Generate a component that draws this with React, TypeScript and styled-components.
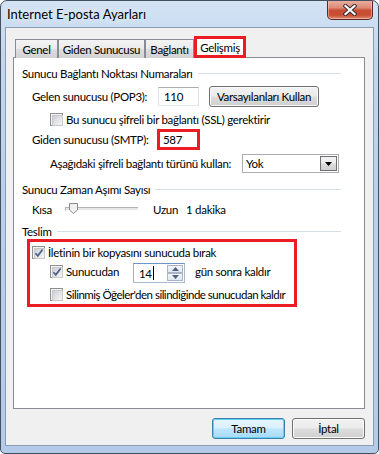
import React from "react";
import styled, { createGlobalStyle, css } from "styled-components";

const GlobalStyle = createGlobalStyle`
  html, body { margin: 0; padding: 0; background: #ffffff; }
  body { font-family: "Lato", "Liberation Sans", sans-serif; font-size: 11.5px; letter-spacing: -0.3px; color: #000; }
  * { box-sizing: border-box; }
`;

const RED = "#ec1c24";

const Window = styled.div`
  width: 379px;
  height: 454px;
  border: 1px solid #43505f;
  border-radius: 7px 7px 5px 5px;
  background: linear-gradient(180deg, #d3e3f4 0%, #c2d7ee 12%, #b9d1ec 40%, #b3cbe8 100%);
  display: flex;
  flex-direction: column;
  padding: 0 4px 7px 4px;
  overflow: hidden;
`;

const TitleBar = styled.div`
  height: 26px;
  display: flex;
  align-items: flex-start;
`;

const Title = styled.div`
  align-self: center;
  padding-left: 2px;
  line-height: 16px;
  font-size: 13px;
  letter-spacing: 0;
  color: #000;
  text-shadow: 0 0 6px rgba(255, 255, 255, 0.9);
`;

const CloseButton = styled.div`
  margin-left: auto;
  margin-top: -1px;
  margin-right: 1px;
  width: 46px;
  height: 20px;
  border: 1px solid #5a2a22;
  border-top: none;
  border-radius: 0 0 5px 5px;
  background: linear-gradient(180deg, #eab3a6 0%, #dd8c77 40%, #c74d33 55%, #c94f33 80%, #e09075 100%);
  box-shadow: inset 0 0 0 1px rgba(255, 220, 210, 0.45);
  display: flex;
  align-items: center;
  justify-content: center;
`;

const Client = styled.div`
  flex: 1;
  border: 1px solid #8a9cb2;
  background: #f0f0f0;
  padding: 8px 8px 0 7px;
  display: flex;
  flex-direction: column;
`;

const TabRow = styled.div`
  height: 22px;
  margin-bottom: -1px;
  padding-left: 2px;
  display: flex;
  align-items: flex-end;
  position: relative;
  z-index: 1;
`;

const Tab = styled.div<{ $selected?: boolean; $w: number }>`
  width: ${(p) => p.$w}px;
  height: 19px;
  border: 1px solid #898c95;
  border-bottom: none;
  background: linear-gradient(180deg, #f3f3f3 0%, #ebebeb 50%, #dedede 50%, #d2d2d2 100%);
  display: flex;
  align-items: center;
  justify-content: center;
  line-height: 15px;
  white-space: nowrap;
  ${(p) =>
    p.$selected &&
    css`
      height: 22px;
      background: #ffffff;
      border: 3px solid ${RED};
      align-items: flex-start;
      padding-top: 1px;
    `}
`;

const Panel = styled.div`
  flex: 1;
  background: #ffffff;
  border: 1px solid #898c95;
  padding: 8px 23px 0 8px;
  display: flex;
  flex-direction: column;
`;

const SectionHeading = styled.div<{ $gap?: number }>`
  display: flex;
  align-items: center;
  height: 15px;
  line-height: 15px;
  margin-top: ${(p) => p.$gap ?? 0}px;
  white-space: nowrap;
  &::after {
    content: "";
    flex: 1;
    height: 1px;
    margin-left: 5px;
    background: #d5dfe5;
  }
`;

const Row = styled.div<{ $gap: number; $indent: number; $h: number }>`
  display: flex;
  align-items: center;
  margin-top: ${(p) => p.$gap}px;
  padding-left: ${(p) => p.$indent}px;
  height: ${(p) => p.$h}px;
  white-space: nowrap;
`;

const Label = styled.span<{ $w?: number; $ml?: number; $tight?: boolean }>`
  line-height: 15px;
  ${(p) => p.$w !== undefined && css`width: ${p.$w}px; flex: none;`}
  margin-left: ${(p) => p.$ml ?? 0}px;
  ${(p) => p.$tight && css`letter-spacing: -0.5px;`}
`;

const TextBox = styled.div<{ $w: number; $h: number; $red?: boolean }>`
  width: ${(p) => p.$w}px;
  height: ${(p) => p.$h}px;
  background: #fff;
  border: 1px solid #abadb3;
  border-left-color: #e2e3ea;
  border-right-color: #dbdfe6;
  border-bottom-color: #e3e9ef;
  padding-left: 5px;
  display: flex;
  align-items: center;
  line-height: 15px;
  ${(p) =>
    p.$red &&
    css`
      border: 3px solid ${RED};
      padding-left: 3px;
    `}
`;

const PushButton = styled.div<{ $w: number; $default?: boolean }>`
  width: ${(p) => p.$w}px;
  height: 21px;
  border: 1px solid #707070;
  border-radius: 3px;
  background: linear-gradient(180deg, #f2f2f2 0%, #ebebeb 48%, #dddddd 52%, #cfcfcf 100%);
  box-shadow: inset 0 0 0 1px #fbfbfb;
  display: flex;
  align-items: center;
  justify-content: center;
  line-height: 15px;
  white-space: nowrap;
  ${(p) =>
    p.$default &&
    css`
      border-color: #3c7fb1;
      background: linear-gradient(180deg, #eaf6fd 0%, #d9f0fc 48%, #bee6fd 52%, #a7d9f5 100%);
      box-shadow: inset 0 0 0 1px #62d2f3;
    `}
`;

const CheckBoxBox = styled.div`
  width: 13px;
  height: 13px;
  flex: none;
  border: 1px solid #8f8f8f;
  background: #f4f4f4;
  padding: 1px;
  position: relative;
  &::before {
    content: "";
    display: block;
    width: 9px;
    height: 9px;
    border: 1px solid #c8c8c8;
    background: linear-gradient(135deg, #cbcfd5 0%, #e6e7e9 60%, #f7f7f7 100%);
  }
`;

const CheckMark = styled.svg`
  position: absolute;
  left: 1px;
  top: 1px;
`;

const CheckBox: React.FC<{ checked?: boolean }> = ({ checked }) => (
  <CheckBoxBox>
    {checked && (
      <CheckMark width="10" height="10" viewBox="0 0 10 10">
        <path d="M1.5 5.2 L3.8 7.8 L8.6 1.6" fill="none" stroke="#4a5f8c" strokeWidth="1.7" />
      </CheckMark>
    )}
  </CheckBoxBox>
);

const CheckRow = styled.div<{ $gap: number; $indent: number }>`
  display: flex;
  align-items: center;
  gap: 3px;
  margin-top: ${(p) => p.$gap}px;
  padding-left: ${(p) => p.$indent}px;
  height: 13px;
  white-space: nowrap;
`;

const Combo = styled.div`
  width: 97px;
  height: 19px;
  border: 1px solid #abadb3;
  background: #fff;
  display: flex;
  align-items: stretch;
`;

const ComboText = styled.div`
  flex: 1;
  padding-left: 3px;
  line-height: 15px;
  display: flex;
  align-items: center;
`;

const ComboArrow = styled.div`
  width: 17px;
  margin: 1px;
  border: 1px solid #707070;
  background: linear-gradient(180deg, #f2f2f2 0%, #ebebeb 48%, #dddddd 52%, #cfcfcf 100%);
  display: flex;
  align-items: center;
  justify-content: center;
`;

const SliderTrack = styled.div`
  width: 73px;
  height: 4px;
  flex: none;
  border-top: 1px solid #b3b3b3;
  border-left: 1px solid #b3b3b3;
  border-bottom: 1px solid #ffffff;
  background: #e5e7e8;
  position: relative;
`;

const SliderThumb = styled.svg`
  position: absolute;
  left: 3px;
  top: -5px;
`;

const DeliveryBox = styled.div`
  margin-left: 5px;
  width: 270px;
  border: 3px solid ${RED};
  padding: 4px 0 3px 2px;
  display: flex;
  flex-direction: column;
`;

const SpinBox = styled.div`
  width: 52px;
  height: 20px;
  margin-left: 1px;
  margin-top: -1px;
  align-self: flex-start;
  border: 1px solid #aab9d0;
  border-top-color: #6d94c8;
  border-left-color: #93b2d9;
  background: #fff;
  display: flex;
`;

const SpinText = styled.div`
  flex: 1;
  padding-left: 5px;
  display: flex;
  align-items: center;
  line-height: 15px;
  &::after {
    content: "";
    width: 1px;
    height: 14px;
    background: #000;
    margin-left: 1px;
  }
`;

const SpinButtons = styled.div`
  width: 16px;
  margin: 1px;
  display: flex;
  flex-direction: column;
`;

const SpinHalf = styled.div`
  flex: 1;
  border: 1px solid #a9b5c6;
  background: linear-gradient(180deg, #f4f7fb 0%, #dfe6ef 100%);
  display: flex;
  align-items: center;
  justify-content: center;
`;

const Footer = styled.div`
  height: 36px;
  padding-top: 9px;
  display: flex;
  justify-content: flex-end;
  gap: 7px;
`;

export default function App() {
  return (
    <>
      <GlobalStyle />
      <Window>
        <TitleBar>
          <Title>Internet E-posta Ayarları</Title>
          <CloseButton>
            <svg width="14" height="12" viewBox="0 0 14 12">
              <path d="M2.5 2 L11.5 10 M11.5 2 L2.5 10" stroke="#3a2b2b" strokeWidth="4.2" strokeLinecap="square" />
              <path d="M2.5 2 L11.5 10 M11.5 2 L2.5 10" stroke="#ffffff" strokeWidth="2.2" strokeLinecap="square" />
            </svg>
          </CloseButton>
        </TitleBar>
        <Client>
          <TabRow>
            <Tab $w={43}>Genel</Tab>
            <Tab $w={87}>Giden Sunucusu</Tab>
            <Tab $w={49}>Bağlantı</Tab>
            <Tab $w={52} $selected>Gelişmiş</Tab>
          </TabRow>
          <Panel>
            <SectionHeading>Sunucu Bağlantı Noktası Numaraları</SectionHeading>
            <Row $gap={5} $indent={10} $h={21}>
              <Label $w={126}>Gelen sunucusu (POP3):</Label>
              <TextBox $w={41} $h={19}>110</TextBox>
              <PushButton $w={110} style={{ marginLeft: 10 }}>Varsayılanları Kullan</PushButton>
            </Row>
            <CheckRow $gap={6} $indent={28}>
              <CheckBox />
              <Label>Bu sunucu şifreli bir bağlantı (SSL) gerektirir</Label>
            </CheckRow>
            <Row $gap={3} $indent={10} $h={21}>
              <Label $w={125}>Giden sunucusu (SMTP):</Label>
              <TextBox $w={43} $h={21} $red>587</TextBox>
            </Row>
            <Row $gap={4} $indent={28} $h={19}>
              <Label $w={192}>Aşağıdaki şifreli bağlantı türünü kullan:</Label>
              <Combo>
                <ComboText>Yok</ComboText>
                <ComboArrow>
                  <svg width="7" height="4" viewBox="0 0 7 4">
                    <path d="M0 0 H7 L3.5 4 Z" fill="#000" />
                  </svg>
                </ComboArrow>
              </Combo>
            </Row>
            <SectionHeading $gap={9}>Sunucu Zaman Aşımı Sayısı</SectionHeading>
            <Row $gap={2} $indent={10} $h={20}>
              <Label $w={33}>Kısa</Label>
              <SliderTrack>
                <SliderThumb width="9" height="11" viewBox="0 0 9 11">
                  <path d="M0.5 0.5 H8.5 V7 L4.5 10.5 L0.5 7 Z" fill="#f1f1f1" stroke="#8a8a8a" />
                </SliderThumb>
              </SliderTrack>
              <Label $ml={15}>Uzun</Label>
              <Label $ml={8}>1 dakika</Label>
            </Row>
            <SectionHeading $gap={5}>Teslim</SectionHeading>
            <DeliveryBox>
              <CheckRow $gap={0} $indent={0}>
                <CheckBox checked />
                <Label>İletinin bir kopyasını sunucuda bırak</Label>
              </CheckRow>
              <Row $gap={5} $indent={18} $h={14}>
                <CheckBox checked />
                <Label $w={66} $ml={3}>Sunucudan</Label>
                <SpinBox>
                  <SpinText>14</SpinText>
                  <SpinButtons>
                    <SpinHalf>
                      <svg width="7" height="4" viewBox="0 0 7 4">
                        <path d="M0 4 H7 L3.5 0 Z" fill="#4d6185" />
                      </svg>
                    </SpinHalf>
                    <SpinHalf>
                      <svg width="7" height="4" viewBox="0 0 7 4">
                        <path d="M0 0 H7 L3.5 4 Z" fill="#4d6185" />
                      </svg>
                    </SpinHalf>
                  </SpinButtons>
                </SpinBox>
                <Label $ml={10}>gün sonra kaldır</Label>
              </Row>
              <CheckRow $gap={10} $indent={18}>
                <CheckBox />
                <Label $tight>Silinmiş Öğeler'den silindiğinde sunucudan kaldır</Label>
              </CheckRow>
            </DeliveryBox>
          </Panel>
          <Footer>
            <PushButton $w={73} $default>Tamam</PushButton>
            <PushButton $w={73}>İptal</PushButton>
          </Footer>
        </Client>
      </Window>
    </>
  );
}
